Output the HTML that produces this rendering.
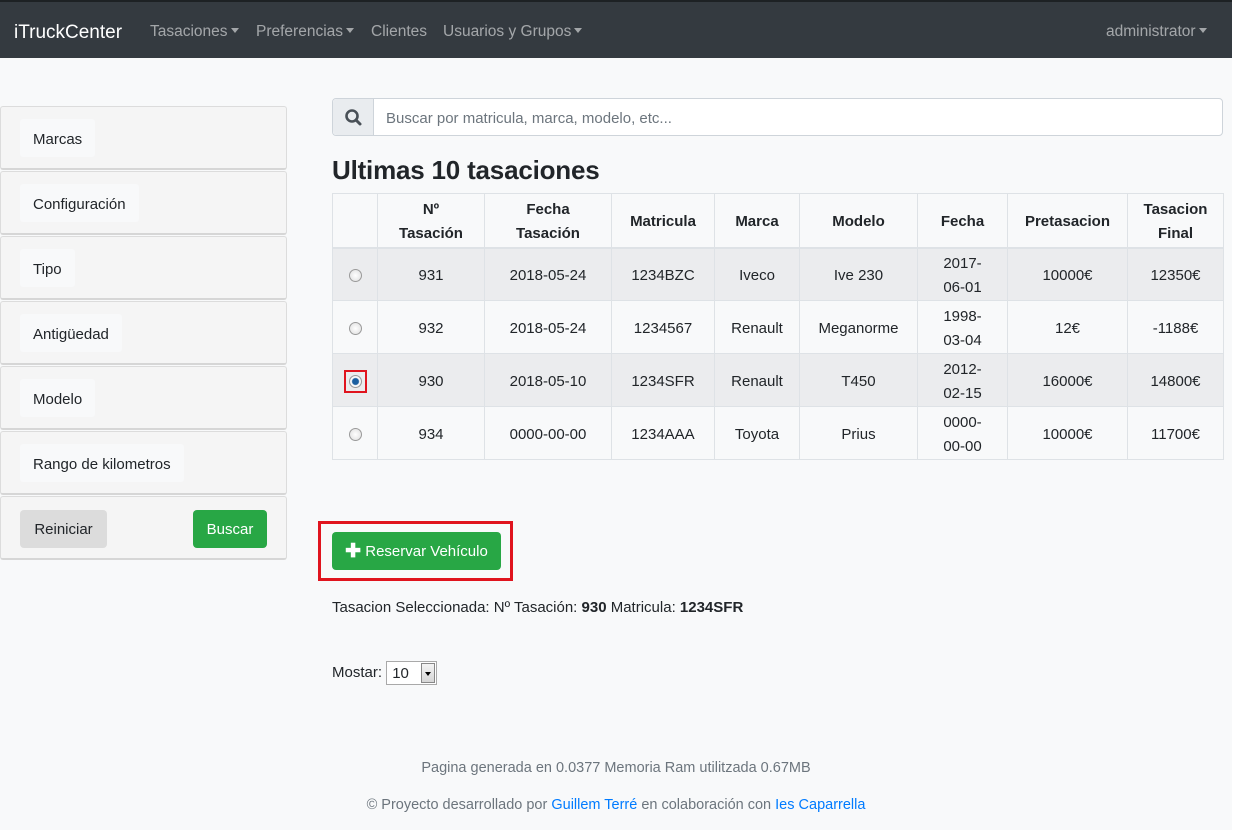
<!DOCTYPE html>
<html><head><meta charset="utf-8"><style>
*{box-sizing:border-box;margin:0;padding:0}
body{width:1244px;height:830px;background:#fff;font-family:"Liberation Sans",sans-serif;font-size:15px;color:#212529;position:relative;overflow:hidden}
#page{position:absolute;left:0;top:0;width:1232px;height:830px;background:#f8f9fa}
.nav{position:absolute;left:0;top:0;width:1232px;height:58px;background:#343a40;border-top:2px solid #1d2124}
.nav span{position:absolute;top:21px;color:rgba(255,255,255,.55);font-size:15.5px}
.nav .brand{color:#fff;font-size:19px;top:20px;left:14px}
.car{display:inline-block;width:0;height:0;border-left:4px solid transparent;border-right:4px solid transparent;border-top:5px solid rgba(255,255,255,.55);vertical-align:3px;margin-left:3px}
.card{position:absolute;left:0;width:287px;height:64px;background:#f5f5f5;border:1px solid #dcdcdc;border-bottom:2px solid #d6d6d6;border-radius:3px}
.card .lb{position:absolute;left:19px;top:12px;height:38px;padding:2px 13px 0;line-height:38px;background:#f8f9fa;border-radius:3px}
.btn{position:absolute;height:38px;line-height:40px;border-radius:4px;font-size:15px;text-align:center}
.search{position:absolute;left:332px;top:98px;width:891px;height:38px;border:1px solid #ced4da;border-radius:4px;background:#fff}
.search .ic{position:absolute;left:0;top:0;width:41px;height:36px;background:#e9ecef;border-right:1px solid #ced4da;border-radius:4px 0 0 4px}
.search .ph{position:absolute;left:53px;top:11px;color:#6c757d}
h2{position:absolute;left:332px;top:155px;font-size:26px;font-weight:bold;letter-spacing:-0.2px}
table{position:absolute;left:332px;top:193px;border-collapse:collapse;table-layout:fixed;width:891px}
td,th{border:1px solid #dee2e6;text-align:center;vertical-align:middle;font-size:15px;line-height:24px;padding-top:3px}
th{height:54px;font-weight:bold;border-bottom:2px solid #dee2e6}
td{height:53px}
tr.s td{background:#ebecee}
.r{display:inline-block;width:13px;height:13px;border-radius:50%;border:1px solid #9a9a9a;background:radial-gradient(#fff,#ddd);vertical-align:middle}
.foot{position:absolute;left:0;width:1232px;text-align:center;color:#6c757d;font-size:14.5px}
a{color:#007bff;text-decoration:none}
</style></head><body><div id="page">
<div class="nav">
<span class="brand">iTruckCenter</span>
<span style="left:150px">Tasaciones<i class="car"></i></span>
<span style="left:256px">Preferencias<i class="car"></i></span>
<span style="left:371px">Clientes</span>
<span style="left:443px">Usuarios y Grupos<i class="car"></i></span>
<span style="left:1106px">administrator<i class="car"></i></span>
</div>

<div class="card" style="top:106px"><div class="lb">Marcas</div></div>
<div class="card" style="top:171px"><div class="lb">Configuración</div></div>
<div class="card" style="top:236px"><div class="lb">Tipo</div></div>
<div class="card" style="top:301px"><div class="lb">Antigüedad</div></div>
<div class="card" style="top:366px"><div class="lb">Modelo</div></div>
<div class="card" style="top:431px"><div class="lb">Rango de kilometros</div></div>
<div class="card" style="top:496px">
<div class="btn" style="left:19px;top:13px;width:87px;background:#dcdcdc">Reiniciar</div>
<div class="btn" style="left:192px;top:13px;width:74px;background:#28a745;color:#fff">Buscar</div>
</div>

<div class="search"><div class="ic"><svg width="41" height="36" viewBox="0 0 41 36"><circle cx="19" cy="17" r="5.5" fill="none" stroke="#495057" stroke-width="2.6"/><line x1="23" y1="21" x2="27" y2="25" stroke="#495057" stroke-width="3" stroke-linecap="round"/></svg></div><div class="ph">Buscar por matricula, marca, modelo, etc...</div></div>

<h2>Ultimas 10 tasaciones</h2>
<table>
<colgroup><col style="width:45px"><col style="width:107px"><col style="width:127px"><col style="width:103px"><col style="width:85px"><col style="width:118px"><col style="width:90px"><col style="width:120px"><col style="width:96px"></colgroup>
<tr><th></th><th>Nº<br>Tasación</th><th>Fecha<br>Tasación</th><th>Matricula</th><th>Marca</th><th>Modelo</th><th>Fecha</th><th>Pretasacion</th><th>Tasacion<br>Final</th></tr>
<tr class="s"><td><span class="r"></span></td><td>931</td><td>2018-05-24</td><td>1234BZC</td><td>Iveco</td><td>Ive 230</td><td>2017-<br>06-01</td><td>10000€</td><td>12350€</td></tr>
<tr><td><span class="r"></span></td><td>932</td><td>2018-05-24</td><td>1234567</td><td>Renault</td><td>Meganorme</td><td>1998-<br>03-04</td><td>12€</td><td>-1188€</td></tr>
<tr class="s"><td><span style="display:inline-block;border:2px solid #e0141e;padding:3px;line-height:0;vertical-align:middle"><span class="r" style="background:radial-gradient(circle,#1a5fa0 0,#1a5fa0 3px,#fff 4px,#ddd)"></span></span></td><td>930</td><td>2018-05-10</td><td>1234SFR</td><td>Renault</td><td>T450</td><td>2012-<br>02-15</td><td>16000€</td><td>14800€</td></tr>
<tr><td><span class="r"></span></td><td>934</td><td>0000-00-00</td><td>1234AAA</td><td>Toyota</td><td>Prius</td><td>0000-<br>00-00</td><td>10000€</td><td>11700€</td></tr>
</table>

<div style="position:absolute;left:318px;top:521px;width:195px;height:60px;border:3px solid #e0141e"></div>
<div class="btn" style="left:332px;top:532px;width:169px;background:#28a745;color:#fff;font-size:15px"><b style="font-size:19px;vertical-align:-1px">✚</b> Reservar Vehículo</div>

<div style="position:absolute;left:332px;top:599px">Tasacion Seleccionada: Nº Tasación: <b>930</b> Matricula: <b>1234SFR</b></div>
<div style="position:absolute;left:332px;top:661px">Mostar: <span style="display:inline-block;vertical-align:middle;width:51px;height:24px;border:1px solid #a9a9a9;background:#fff;position:relative;line-height:24px;padding-left:5px">10<span style="position:absolute;right:1px;top:1px;width:14px;height:20px;background:linear-gradient(#f4f4f4,#d6d6d6);border:1px solid #888"><i style="position:absolute;left:3px;top:8px;border-left:3px solid transparent;border-right:3px solid transparent;border-top:4px solid #000"></i></span></span></div>

<div class="foot" style="top:760px;left:0">Pagina generada en 0.0377 Memoria Ram utilitzada 0.67MB</div>
<div class="foot" style="top:797px">© Proyecto desarrollado por <a>Guillem Terré</a> en colaboración con <a>Ies Caparrella</a></div>
</div></body></html>
